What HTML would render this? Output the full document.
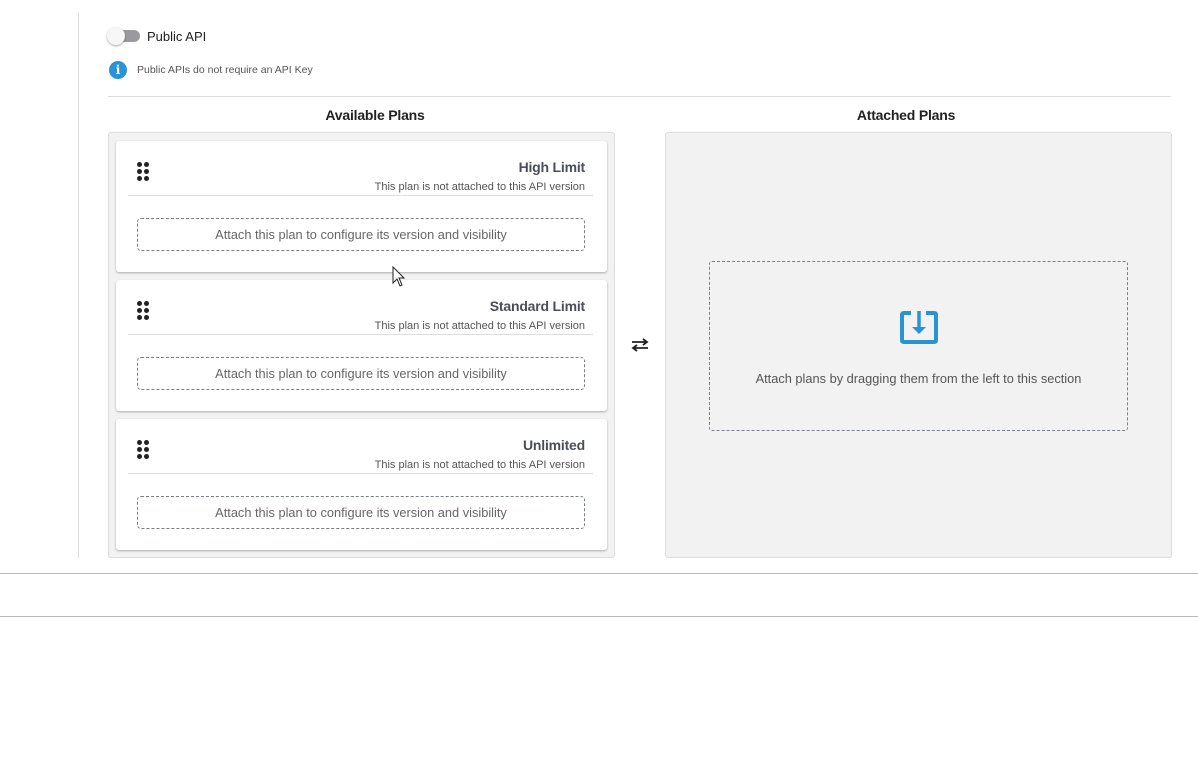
<!DOCTYPE html>
<html><head><meta charset="utf-8"><style>
*{margin:0;padding:0;box-sizing:border-box}
body{width:1198px;height:761px;background:#fff;font-family:"Liberation Sans",Arial,sans-serif;position:relative;overflow:hidden;color:#333}
.a{position:absolute}
.card{position:absolute;left:116px;width:491px;height:131px;background:#fff;border-radius:3px;box-shadow:0 1px 2px rgba(0,0,0,.3)}
.dots{position:absolute;left:21px;top:21px;width:13px;height:18px}
.dots i{position:absolute;width:5px;height:5px;border-radius:50%;background:#222}
.title{position:absolute;right:22px;top:18px;font-size:14px;font-weight:bold;color:#4a4f57;letter-spacing:-0.2px}
.sub{position:absolute;right:22px;top:40px;font-size:11px;color:#555}
.sep{position:absolute;left:12px;right:14px;top:54px;border-top:1px solid #ddd}
.dash{position:absolute;left:21px;width:448px;top:77px;height:33px;border:1px dashed #7a7f88;border-radius:4px;font-size:12.8px;color:#666;text-align:center;line-height:32px}
</style></head><body>
<div class="a" style="left:78px;top:13px;height:545px;border-left:1px solid #ddd"></div>
<div class="a" style="left:110px;top:30px;width:30px;height:12px;border-radius:6px;background:#9a9a9e"></div>
<div class="a" style="left:107px;top:27px;width:18px;height:18px;border-radius:50%;background:#f7f7f7;box-shadow:0 1px 2px rgba(0,0,0,.35)"></div>
<div class="a" style="left:147px;top:29px;font-size:13px;color:#222">Public API</div>
<div class="a" style="left:109px;top:61px;width:18px;height:18px;border-radius:50%;background:#2a93d5;color:#fff;font-size:12px;font-weight:bold;text-align:center;line-height:18px;font-family:'DejaVu Serif',serif">i</div>
<div class="a" style="left:137px;top:64px;font-size:10.5px;color:#555">Public APIs do not require an API Key</div>
<div class="a" style="left:108px;top:96px;width:1063px;border-top:1px solid #ddd"></div>
<div class="a" style="left:122px;width:506px;top:107px;text-align:center;font-size:14px;font-weight:bold;color:#222;letter-spacing:-0.2px">Available Plans</div>
<div class="a" style="left:653px;width:506px;top:107px;text-align:center;font-size:14px;font-weight:bold;color:#222;letter-spacing:-0.2px">Attached Plans</div>
<div class="a" style="left:108px;top:132px;width:507px;height:426px;background:#f2f2f2;border:1px solid #ddd;border-radius:3px"></div>
<div class="a" style="left:665px;top:132px;width:507px;height:426px;background:#f2f2f2;border:1px solid #ddd;border-radius:3px"></div>

<div class="card" style="top:141px"><div class="dots"><i style="left:0;top:0"></i><i style="left:7px;top:0"></i><i style="left:0;top:7px"></i><i style="left:7px;top:7px"></i><i style="left:0;top:14px"></i><i style="left:7px;top:14px"></i></div><div class="title">High Limit</div><div class="sub">This plan is not attached to this API version</div><div class="sep"></div><div class="dash">Attach this plan to configure its version and visibility</div></div>
<div class="card" style="top:280px"><div class="dots"><i style="left:0;top:0"></i><i style="left:7px;top:0"></i><i style="left:0;top:7px"></i><i style="left:7px;top:7px"></i><i style="left:0;top:14px"></i><i style="left:7px;top:14px"></i></div><div class="title">Standard Limit</div><div class="sub">This plan is not attached to this API version</div><div class="sep"></div><div class="dash">Attach this plan to configure its version and visibility</div></div>
<div class="card" style="top:419px"><div class="dots"><i style="left:0;top:0"></i><i style="left:7px;top:0"></i><i style="left:0;top:7px"></i><i style="left:7px;top:7px"></i><i style="left:0;top:14px"></i><i style="left:7px;top:14px"></i></div><div class="title">Unlimited</div><div class="sub">This plan is not attached to this API version</div><div class="sep"></div><div class="dash">Attach this plan to configure its version and visibility</div></div>

<svg class="a" style="left:630px;top:337px" width="20" height="16" viewBox="0 0 20 16"><path d="M2 5H17M13 2L17 5L13 8M18 11H3M7 8L3 11L7 14" stroke="#222" stroke-width="1.8" fill="none"/></svg>

<div class="a" style="left:709px;top:261px;width:419px;height:170px;border:1px dashed #7a7f88;border-radius:3px"></div>
<svg class="a" style="left:898px;top:309px" width="42" height="37" viewBox="0 0 42 37"><path d="M13 4H6Q4 4 4 6V31Q4 33 6 33H36Q38 33 38 31V6Q38 4 36 4H28" stroke="#2a93d5" stroke-width="4" fill="none"/><path d="M21 2V19" stroke="#2a93d5" stroke-width="3.5"/><path d="M14 18H28L21 25Z" fill="#2a93d5"/></svg>
<div class="a" style="left:709px;width:419px;top:371px;text-align:center;font-size:12.8px;color:#555">Attach plans by dragging them from the left to this section</div>

<div class="a" style="left:0;top:573px;width:1198px;border-top:1px solid #bbb"></div>
<div class="a" style="left:0;top:616px;width:1198px;border-top:1px solid #bbb"></div>
<svg class="a" style="left:392px;top:266px" width="14" height="22" viewBox="0 0 14 22"><path d="M1 1V17L5 13L8 20L10 19L7 12H12Z" fill="#fff" stroke="#222" stroke-width="1"/></svg>
</body></html>
